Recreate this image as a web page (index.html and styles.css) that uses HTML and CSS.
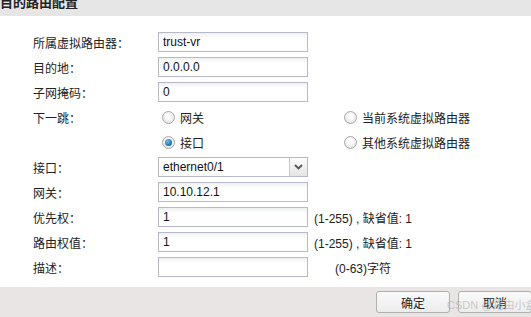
FILE: index.html
```html
<!DOCTYPE html>
<html lang="zh-CN">
<head>
  <meta charset="UTF-8">
  <title>目的路由配置</title>
  <link rel="stylesheet" href="styles.css">
</head>
<body>

  <!-- Dialog title -->
  <div class="title-bar"><span>目的路由配置</span></div>

  <!-- Route form -->
  <form class="route-form">
    <div class="row">
      <label class="lbl">所属虚拟路由器：</label>
      <input class="field" type="text" value="trust-vr">
    </div>
    <div class="row">
      <label class="lbl">目的地：</label>
      <input class="field" type="text" value="0.0.0.0">
    </div>
    <div class="row">
      <label class="lbl">子网掩码：</label>
      <input class="field" type="text" value="0">
    </div>
    <div class="row">
      <label class="lbl">下一跳：</label>
      <span class="radio-cell"><span class="radio"></span>网关</span>
      <span class="radio-cell"><span class="radio"></span>当前系统虚拟路由器</span>
    </div>
    <div class="row">
      <label class="lbl"></label>
      <span class="radio-cell"><span class="radio checked"></span>接口</span>
      <span class="radio-cell"><span class="radio"></span>其他系统虚拟路由器</span>
    </div>
    <div class="row">
      <label class="lbl">接口：</label>
      <div class="select">
        <span class="select-value">ethernet0/1</span>
        <span class="select-btn">
          <svg width="9" height="6" viewBox="0 0 9 6"><path d="M1 1 L4.5 4.5 L8 1" fill="none" stroke="#555" stroke-width="1.8"/></svg>
        </span>
      </div>
    </div>
    <div class="row">
      <label class="lbl">网关：</label>
      <input class="field" type="text" value="10.10.12.1">
    </div>
    <div class="row">
      <label class="lbl">优先权：</label>
      <input class="field" type="text" value="1">
      <span class="hint">(1-255) , 缺省值: 1</span>
    </div>
    <div class="row">
      <label class="lbl">路由权值：</label>
      <input class="field" type="text" value="1">
      <span class="hint">(1-255) , 缺省值: 1</span>
    </div>
    <div class="row">
      <label class="lbl">描述：</label>
      <input class="field" type="text" value="">
      <span class="hint hint-desc">(0-63)字符</span>
    </div>
  </form>

  <!-- Footer buttons -->
  <div class="footer">
    <button class="btn" type="button">确定</button>
    <button class="btn" type="button">取消</button>
    <span class="watermark">CSDN @路由小盒</span>
  </div>

</body>
</html>
```

FILE: styles.css
```css
body {
  margin: 0;
  width: 531px;
  height: 317px;
  overflow: hidden;
  background-color: #fff;
  font-family: "Liberation Sans", Arial, "Noto Sans CJK SC", sans-serif;
  font-size: 12px;
  color: #222;
  position: relative;
}

.title-bar {
  height: 16px;
  background-color: #e6e6e6;
  overflow: hidden;
}

.title-bar span {
  display: block;
  margin-top: -5px;
  line-height: 16px;
  font-size: 13px;
  font-weight: bold;
  color: #222;
}

.route-form {
  margin: 0;
  padding: 16px 0 0 33px;
  height: 255px;
}

.row {
  display: flex;
  align-items: center;
  height: 20px;
  margin-bottom: 5px;
}

.lbl {
  width: 125px;
  flex-shrink: 0;
}

.field {
  width: 150px;
  height: 20px;
  box-sizing: border-box;
  margin: 0;
  padding: 0 4px;
  border: 1px solid #b8b8c8;
  background: linear-gradient(#eef0f0, #fff 5px);
  font-family: inherit;
  font-size: 12px;
  color: #111;
  outline: none;
}

.radio-cell {
  display: flex;
  align-items: center;
  width: 182px;
  padding-left: 4px;
  box-sizing: border-box;
}

.radio {
  width: 11px;
  height: 11px;
  border-radius: 50%;
  border: 1px solid #a8a8a8;
  background: radial-gradient(circle at 50% 40%, #fff 20%, #d8d8d8 100%);
  margin-right: 5px;
  position: relative;
}

.radio.checked::after {
  content: "";
  position: absolute;
  left: 2px;
  top: 2px;
  width: 7px;
  height: 7px;
  border-radius: 50%;
  background: radial-gradient(circle at 40% 35%, #6cc0ef, #0a5f9e 80%);
}

.select {
  display: flex;
  width: 150px;
  height: 20px;
  box-sizing: border-box;
  border: 1px solid #b8b8c8;
  background: #fff;
}

.select-value {
  flex: 1;
  padding-left: 4px;
  line-height: 18px;
  color: #111;
}

.select-btn {
  width: 17px;
  border-left: 1px solid #c8c8c8;
  background: linear-gradient(#fdfdfd, #e4e4e4);
  display: flex;
  align-items: center;
  justify-content: center;
}

.hint {
  margin-left: 6px;
  color: #222;
}

.hint-desc {
  margin-left: 27px;
}

.footer {
  height: 30px;
  background-color: #e8e5e4;
  display: flex;
  align-items: center;
  padding-left: 376px;
  gap: 8px;
}

.btn {
  width: 74px;
  height: 22px;
  border: 1px solid #b0b0b0;
  border-radius: 3px;
  background: linear-gradient(#fafafa, #ececec);
  font-family: inherit;
  font-size: 12px;
  color: #222;
  padding: 0;
  flex-shrink: 0;
}

.watermark {
  position: absolute;
  left: 447px;
  top: 296px;
  font-size: 11px;
  color: rgba(170, 170, 170, 0.6);
  white-space: nowrap;
}
```
